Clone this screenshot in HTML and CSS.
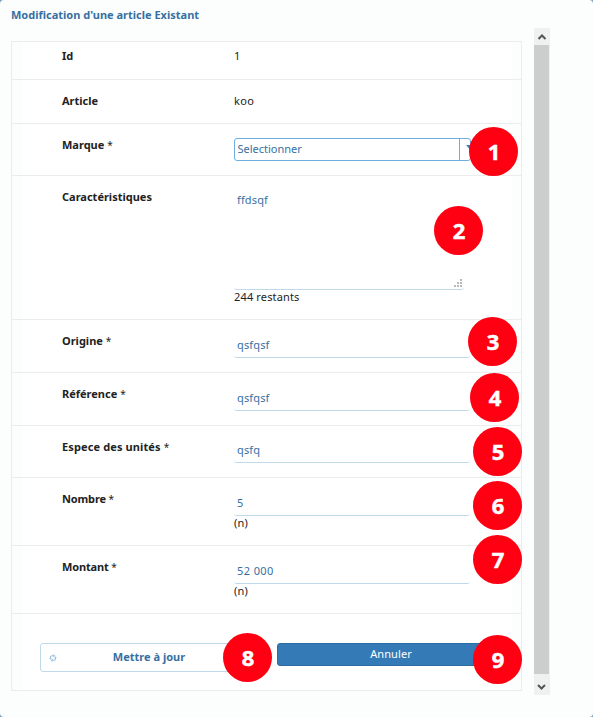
FILE: index.html
```html
<!DOCTYPE html>
<html lang="fr">
<head>
<meta charset="utf-8">
<title>Modification d'une article Existant</title>
<link rel="stylesheet" href="styles.css">
</head>
<body>
<main class="dialog">
  <h1 class="title"><span>Modification d'une article Existant</span></h1>
  <div class="viewport">
    <form class="panel">
      <div class="row row-id"><div class="label">Id</div><div class="value">1</div></div>
      <div class="row row-article"><div class="label">Article</div><div class="value">koo</div></div>
      <div class="row row-brand"><div class="label">Marque <i>*</i></div>
        <div class="value"><div class="select"><span class="select-text">Selectionner</span><span class="select-arrow"><svg width="7" height="4" viewBox="0 0 7 4"><path d="M0 0h7L3.500 4z" fill="#3b83c0"/></svg></span></div></div>
        <span class="badge b1">1</span></div>
      <div class="row row-details"><div class="label">Caractéristiques</div>
        <div class="value"><div class="area">ffdsqf<svg class="grip" width="8" height="8" viewBox="0 0 8 8" fill="#b9b9b9"><path d="M6 0h2v2H6zM3 3h2v2H3zM6 3h2v2H6zM0 6h2v2H0zM3 6h2v2H3zM6 6h2v2H6z"/></svg></div><div class="hint">244 restants</div></div>
        <span class="badge b2">2</span></div>
      <div class="row row-origin"><div class="label">Origine <i>*</i></div><div class="value"><div class="input">qsfqsf</div></div><span class="badge b3">3</span></div>
      <div class="row row-ref"><div class="label">Référence <i>*</i></div><div class="value"><div class="input">qsfqsf</div></div><span class="badge b4">4</span></div>
      <div class="row row-unit"><div class="label">Espece des unités <i>*</i></div><div class="value"><div class="input short">qsfq</div></div><span class="badge b5">5</span></div>
      <div class="row row-count"><div class="label">Nombre <i>*</i></div><div class="value"><div class="input">5</div><div class="hint">(n)</div></div><span class="badge b6">6</span></div>
      <div class="row row-amount"><div class="label">Montant <i>*</i></div><div class="value"><div class="input amount">52 000</div><div class="hint">(n)</div></div><span class="badge b7">7</span></div>
      <div class="actions">
        <div class="btn update"><svg class="refresh" width="8" height="8" viewBox="0 0 8 8"><path d="M1.500 4.500V3q0-1.200 1.200-1.200H5M6.500 3.500V5q0 1.200-1.200 1.200H3" fill="none" stroke="#8db9dc"/><path d="M4.300 0v3.600L6.500 1.800zM3.700 8V4.400L1.500 6.200zM0 4h3L1.500 5.800zM5 4h3L6.500 2.200z" fill="#a9cbe6"/></svg><span>Mettre à jour</span></div>
        <div class="btn cancel"><span>Annuler</span></div>
        <span class="badge b8">8</span><span class="badge b9">9</span>
      </div>
    </form>
    <div class="scrollbar">
      <svg class="arrow" width="16" height="17" viewBox="0 0 16 17" fill="none" stroke="#555" stroke-width="2"><path d="M4.500 11 8 7.500 11.500 11"/></svg>
      <div class="thumb"></div>
      <svg class="arrow bottom" width="16" height="21" viewBox="0 0 16 21" fill="none" stroke="#555" stroke-width="2"><path d="M4 11 7.500 14.500 11 11"/></svg>
    </div>
  </div>
</main>
</body>
</html>
```
FILE: styles.css
```css
* { box-sizing: border-box; }
body { margin: 0; background: #7b9cc0; font: 11px/15px "Noto Sans", "Open Sans", sans-serif; color: #222; }
.dialog { width: 593px; height: 717px; background: #fcfefd; border-radius: 4px; overflow: hidden; }
.title { margin: 0; height: 28px; padding: 7px 0 0 11px; font-size: 11px; line-height: 15px; font-weight: 700; color: #3670a3; white-space: nowrap; }
.viewport { display: flex; height: 667px; gap: 12px; padding-left: 11px; }
.panel { margin: 13px 0 0; width: 511px; height: 650px; border: 1px solid #ebeded; background: linear-gradient(90deg, #fcfefd 10px, #fff 10px, #fff 500px, #fcfefd 500px); }
.row { position: relative; display: grid; grid-template-columns: 172px 237px; padding: 13px 0 0 50px; border-bottom: 1px solid #ebeded; white-space: nowrap; }
.label { font-weight: 700; }
.label i { font-style: normal; font-weight: 400; font-size: 10px; line-height: 10px; }
.row-id { height: 38px; padding-top: 6px; }
.row-article { height: 44px; }
.row-article .value { letter-spacing: .3px; }
.row-brand { height: 52px; }
.row-details { height: 144px; }
.row-origin, .row-ref { height: 53px; }
.row-unit { height: 52px; }
.row-unit .label { letter-spacing: .12px; }
.row-count, .row-amount { height: 68px; }
.row-count .label, .row-amount .label { letter-spacing: -.15px; }
.select, .area, .input { margin-top: 1px; color: #3670a3; }
.select { display: flex; width: 237px; height: 23px; border: 1px solid #6caee0; border-radius: 3px; line-height: 19px; }
.select-text { flex: 1; padding-left: 2.5px; }
.select-arrow { width: 11px; border-left: 1px solid #6caee0; overflow: hidden; display: flex; padding: 6px 0 0 6px; }
.select-arrow svg { flex: none; }
.area { position: relative; width: 230px; height: 100px; padding: 2px 3px; border-bottom: 1px solid #bfd8ea; border-radius: 3px; letter-spacing: .15px; }
.grip { position: absolute; right: 2px; bottom: 2px; }
.input { width: 236px; height: 24px; padding: 0 3px; line-height: 21px; border-bottom: 1px solid #bfd8ea; border-radius: 3px; letter-spacing: .15px; }
.input.amount { letter-spacing: .4px; }
.input.short { height: 23px; line-height: 19px; }
.hint { line-height: 13px; letter-spacing: .15px; }
.badge { position: absolute; width: 49px; height: 49px; border-radius: 50%; background: #fe0012; color: #fff; font: 700 22px/49px "Noto Sans", "Open Sans", sans-serif; -webkit-text-stroke: .5px #fff; text-align: center; text-indent: 1px; z-index: 1; }
.b1 { left: 457px; top: 3px; }
.b2 { left: 422px; top: 30px; }
.b3 { left: 456px; top: -3px; }
.b4 { left: 458px; top: 0; }
.b5 { left: 461px; top: 1px; }
.b6 { left: 461px; top: 3px; }
.b7 { left: 461px; top: -11px; }
.b8 { left: 211px; top: 19px; }
.b9 { left: 461px; top: 21px; }
.actions { position: relative; height: 76px; display: flex; align-items: flex-start; gap: 20px; padding: 29px 0 0 28px; }
.btn { width: 217px; border-radius: 3px; text-align: center; }
.update { display: flex; align-items: center; height: 29px; border: 1px solid #bfd8ea; background: #fff; color: #3670a3; font-weight: 700; padding-left: 8px; }
.update span { flex: 1; padding: 0 15px 2px 0; }
.cancel { width: 228px; height: 23px; line-height: 19px; background: #337ab7; border: 1px solid #2e6da4; color: #fff; letter-spacing: .1px; }
.scrollbar { display: flex; flex-direction: column; width: 16px; height: 667px; background: #f0f0f0; }
.arrow { display: block; flex: none; }
.thumb { flex: 1; width: 15px; background: #cdcdcd; }
```
